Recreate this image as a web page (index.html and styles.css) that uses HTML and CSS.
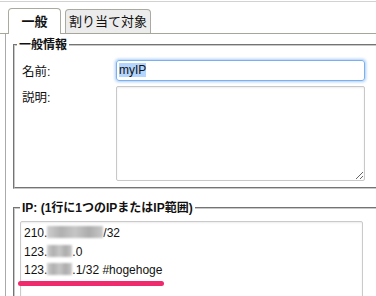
FILE: index.html
```html
<!DOCTYPE html>
<html lang="ja">
<head>
    <meta charset="UTF-8">
    <title>IP</title>
    <link rel="stylesheet" href="styles.css">
</head>
<body>
    <div class="dialog">
        <div class="tabs">
            <div class="tab active">一般</div>
            <div class="tab">割り当て対象</div>
        </div>
        <div class="panel">
            <fieldset class="group">
                <legend>一般情報</legend>
                <div class="row">
                    <label class="name">名前:</label>
                    <div class="field"><span class="sel">myIP</span></div>
                </div>
                <div class="row top">
                    <label class="name">説明:</label>
                    <textarea class="memo"></textarea>
                </div>
            </fieldset>
            <fieldset class="group ips">
                <legend>IP: (1行に1つのIPまたはIP範囲)</legend>
                <div class="iplist">
                    <div>210.<span class="blur wide"></span>/32</div>
                    <div>123.<span class="blur"></span>.0</div>
                    <div>123.<span class="blur"></span>.1/32 #hogehoge</div>
                    <div class="mark"></div>
                </div>
            </fieldset>
        </div>
    </div>
</body>
</html>
```
FILE: styles.css
```css
body{
    margin: 0;
    background-color: #fff;
    font-family: "Liberation Sans", "Noto Sans CJK JP", sans-serif;
    font-size: 12px;
    color: #111;
    overflow: hidden;
}
.dialog{
    width: 400px;
    margin-top: 1px;
    border-top: 1px solid #d2d2d2;
}
.tabs{
    display: flex;
    align-items: flex-end;
    gap: 4px;
    padding: 6px 0 0 8px;
    border-bottom: 1px solid #a6a699;
}
.tab{
    box-sizing: border-box;
    width: 86px;
    height: 24px;
    line-height: 24px;
    border: 1px solid #aaaaa0;
    border-bottom: none;
    border-radius: 4px 4px 0 0;
    background-color: #ececec;
    text-align: center;
    font-size: 13px;
}
.tab.active{
    width: 53px;
    height: 26px;
    line-height: 26px;
    margin-bottom: -1px;
    background-color: #fff;
    font-weight: bold;
}
.panel{
    margin-left: 5px;
    border-left: 1px solid #aaa;
    padding: 3px 0 0 7px;
}
.group{
    margin: 0;
    padding: 7px 0 6px 2px;
    border: 2px groove #c8c8c8;
}
.group legend{
    padding: 0 2px;
    line-height: 16px;
    font-weight: bold;
}
.row{
    display: flex;
    align-items: center;
    padding-left: 5px;
}
.row.top{
    align-items: flex-start;
    margin-top: 5px;
}
.name{
    width: 94px;
    font-size: 12.5px;
}
.row.top .name{
    margin-top: 1px;
}
.field{
    box-sizing: border-box;
    width: 249px;
    height: 21px;
    padding: 0 2px;
    border: 1px solid #7ab0ef;
    border-radius: 3px;
    box-shadow: 0 0 3px 1px #a9cdf7;
    line-height: 19px;
    font-size: 12px;
}
.sel{
    background-color: #b4d5fe;
}
.memo{
    box-sizing: border-box;
    display: block;
    width: 249px;
    height: 95px;
    margin: 0;
    border: 1px solid #c8c8c8;
    border-radius: 2px;
    box-shadow: inset 0 1px 2px rgba(0, 0, 0, 0.08);
}
.ips{
    margin-top: 11px;
    padding: 5px 0 0 5px;
}
.iplist{
    position: relative;
    box-sizing: border-box;
    width: 343px;
    height: 90px;
    padding: 2px 3px;
    border: 1px solid #cacaca;
    border-radius: 2px;
    box-shadow: inset 0 1px 2px rgba(0, 0, 0, 0.08);
    font-size: 12px;
    line-height: 18.5px;
}
.blur{
    display: inline-block;
    width: 25px;
    height: 12px;
    vertical-align: -1px;
    background: linear-gradient(90deg, #cfcfcf, #b0b0b0 25%, #c6c6c6 50%, #acacac 75%, #c8c8c8);
    filter: blur(1px);
}
.blur.wide{
    width: 56px;
}
.mark{
    position: absolute;
    left: -3px;
    top: 59px;
    width: 146px;
    height: 5px;
    border-radius: 3px;
    background-color: #ef2b6e;
}
```
